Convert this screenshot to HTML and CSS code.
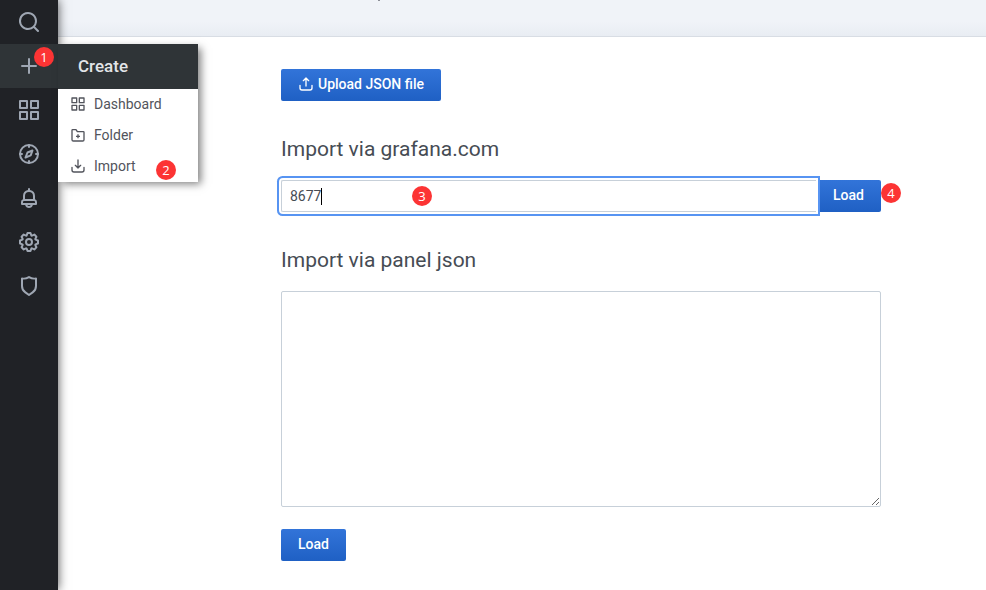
FILE: index.html
```html
<!DOCTYPE html>
<html lang="en">
<head>
<meta charset="utf-8">
<title>Import dashboard</title>
<link rel="stylesheet" href="styles.css">
</head>
<body>
<svg class="defs" aria-hidden="true">
  <symbol id="apps" viewBox="0 0 24 24"><path d="M10,13H3a1,1,0,0,0-1,1v7a1,1,0,0,0,1,1h7a1,1,0,0,0,1-1V14A1,1,0,0,0,10,13ZM9,20H4V15H9ZM21,2H14a1,1,0,0,0-1,1v7a1,1,0,0,0,1,1h7a1,1,0,0,0,1-1V3A1,1,0,0,0,21,2ZM20,9H15V4h5Zm1,4H14a1,1,0,0,0-1,1v7a1,1,0,0,0,1,1h7a1,1,0,0,0,1-1V14A1,1,0,0,0,21,13Zm-1,7H15V15h5ZM10,2H3A1,1,0,0,0,2,3v7a1,1,0,0,0,1,1h7a1,1,0,0,0,1-1V3A1,1,0,0,0,10,2ZM9,9H4V4H9Z"/></symbol>
</svg>
<div class="app">
  <nav class="sidebar" aria-label="Main">
    <a class="side-link" href="#" aria-label="Search"><svg class="icon" viewBox="0 0 24 24"><path d="M21.71,20.29,18,16.61A9,9,0,1,0,16.61,18l3.68,3.68a1,1,0,0,0,1.42,0A1,1,0,0,0,21.71,20.29ZM11,18a7,7,0,1,1,7-7A7,7,0,0,1,11,18Z"/></svg></a>
    <div class="side-item active">
      <a class="side-link" href="#" aria-label="Create"><svg class="icon" viewBox="0 0 24 24"><path d="M19,11H13V5a1,1,0,0,0-2,0v6H5a1,1,0,0,0,0,2h6v6a1,1,0,0,0,2,0V13h6a1,1,0,0,0,0-2Z"/></svg></a>
      <span class="badge badge-create">1</span>
      <div class="menu">
        <a class="menu-title" href="#">Create</a>
        <a class="menu-link" href="#"><svg class="icon small"><use href="#apps"/></svg>Dashboard</a>
        <a class="menu-link" href="#"><svg class="icon small" viewBox="0 0 24 24"><path class="line" d="M3 5a1 1 0 0 1 1-1h5l2 3h9a1 1 0 0 1 1 1v11a2 2 0 0 1-2 2H5a2 2 0 0 1-2-2Z"/><path d="M11 11h2v2h2v2h-2v2h-2v-2H9v-2h2Z"/></svg>Folder</a>
        <a class="menu-link" href="#"><svg class="icon small" viewBox="0 0 24 24"><path class="line" d="M12 3v12M8 11l4 4 4-4M3 14v4a3 3 0 0 0 3 3h12a3 3 0 0 0 3-3v-4"/></svg>Import<span class="badge badge-import">2</span></a>
      </div>
    </div>
    <a class="side-link" href="#" aria-label="Dashboards"><svg class="icon"><use href="#apps"/></svg></a>
    <a class="side-link" href="#" aria-label="Explore"><svg class="icon" viewBox="0 0 24 24"><g class="line"><circle cx="12" cy="12" r="9"/><path d="M12 3v2M12 19v2M3 12h2M19 12h2"/><path d="M15.500 8.500 13.700 13.300 8.500 15.500 10.500 10.500Z"/></g></svg></a>
    <a class="side-link" href="#" aria-label="Alerting"><svg class="icon" viewBox="0 0 24 24"><path d="M18,13.180V10a6,6,0,0,0-5-5.910V3a1,1,0,0,0-2,0V4.090A6,6,0,0,0,6,10v3.180A3,3,0,0,0,4,16v2a1,1,0,0,0,1,1H8.140a4,4,0,0,0,7.720,0H19a1,1,0,0,0,1-1V16A3,3,0,0,0,18,13.180ZM8,10a4,4,0,0,1,8,0v3H8Zm4,10a2,2,0,0,1-1.720-1h3.440A2,2,0,0,1,12,20Zm6-3H6V16a1,1,0,0,1,1-1H17a1,1,0,0,1,1,1Z"/></svg></a>
    <a class="side-link" href="#" aria-label="Configuration"><svg class="icon" viewBox="0 0 24 24"><path d="M21.32,9.55l-1.89-.63.89-1.78A1,1,0,0,0,20.13,6L18,3.87a1,1,0,0,0-1.15-.19l-1.78.89-.63-1.89A1,1,0,0,0,13.5,2h-3a1,1,0,0,0-.95.68L8.92,4.57,7.14,3.68A1,1,0,0,0,6,3.87L3.87,6a1,1,0,0,0-.19,1.15l.89,1.78-1.89.63A1,1,0,0,0,2,10.5v3a1,1,0,0,0,.68.95l1.89.63-.89,1.78A1,1,0,0,0,3.87,18L6,20.13a1,1,0,0,0,1.15.19l1.78-.89.63,1.89a1,1,0,0,0,.95.68h3a1,1,0,0,0,.95-.68l.63-1.89,1.78.89A1,1,0,0,0,18,20.13L20.13,18a1,1,0,0,0,.19-1.15l-.89-1.78,1.89-.63A1,1,0,0,0,22,13.5v-3A1,1,0,0,0,21.32,9.55ZM20,12.78l-1.2.4A2,2,0,0,0,17.64,16l.57,1.14-1.1,1.1L16,17.64a2,2,0,0,0-2.79,1.16l-.4,1.2H11.22l-.4-1.2A2,2,0,0,0,8,17.64l-1.14.57-1.1-1.1L6.36,16A2,2,0,0,0,5.2,13.18L4,12.78V11.22l1.2-.4A2,2,0,0,0,6.36,8L5.79,6.89l1.1-1.1L8,6.36A2,2,0,0,0,10.82,5.2l.4-1.2h1.56l.4,1.2A2,2,0,0,0,16,6.36l1.14-.57,1.1,1.1L17.64,8a2,2,0,0,0,1.16,2.79l1.2.4ZM12,8a4,4,0,1,0,4,4A4,4,0,0,0,12,8Zm0,6a2,2,0,1,1,2-2A2,2,0,0,1,12,14Z"/></svg></a>
    <a class="side-link" href="#" aria-label="Server admin"><svg class="icon" viewBox="0 0 24 24"><path d="M19.63,3.65a1,1,0,0,0-.84-.2,8,8,0,0,1-6.22-1.27,1,1,0,0,0-1.14,0A8,8,0,0,1,5.21,3.45a1,1,0,0,0-.84.2A1,1,0,0,0,4,4.43v7.45a9,9,0,0,0,3.77,7.33l3.65,2.6a1,1,0,0,0,1.16,0l3.65-2.6A9,9,0,0,0,20,11.88V4.43A1,1,0,0,0,19.63,3.65ZM18,11.88a7,7,0,0,1-2.93,5.7L12,19.77,8.93,17.58A7,7,0,0,1,6,11.88V5.58a10,10,0,0,0,6-1.39,10,10,0,0,0,6,1.39Z"/></svg></a>
  </nav>
  <div class="page">
    <header class="page-header"></header>
    <main class="content">
      <button class="btn" type="button"><svg class="icon small" viewBox="0 0 24 24"><path class="line" d="M12 15V3M8 7l4-4 4 4M3 14v4a3 3 0 0 0 3 3h12a3 3 0 0 0 3-3v-4"/></svg>Upload JSON file</button>
      <form class="field">
        <label class="heading" for="dashboard-id">Import via grafana.com</label>
        <div class="input-row">
          <div class="input-wrap">
            <input class="text-input" id="dashboard-id" type="text" value="8677">
            <span class="caret"></span>
            <span class="badge badge-id">3</span>
          </div>
          <button class="btn" type="button">Load</button>
          <span class="badge badge-load">4</span>
        </div>
      </form>
      <form class="field">
        <label class="heading" for="panel-json">Import via panel json</label>
        <textarea class="json-input" id="panel-json"></textarea>
        <button class="btn" type="button">Load</button>
      </form>
    </main>
  </div>
</div>
</body>
</html>
```
FILE: styles.css
```css
* { box-sizing: border-box; }

body {
  margin: 0;
  background: #fff;
  color: #464c54;
  font: 14px/20px Roboto, sans-serif;
}

a { color: inherit; text-decoration: none; }

.defs { position: absolute; width: 0; height: 0; }

.app { display: flex; min-height: 100vh; }

.icon { width: 24px; height: 24px; flex: none; fill: currentColor; }
.small { width: 16px; height: 16px; }
.line {
  fill: none;
  stroke: currentColor;
  stroke-width: 2;
  stroke-linecap: round;
  stroke-linejoin: round;
}

/* Sidebar */
.sidebar {
  position: relative;
  z-index: 2;
  flex: none;
  width: 58px;
  background: #202226;
  color: #9fa7b3;
  box-shadow: 0 0 10px rgba(0, 0, 0, 0.7);
}
.side-link {
  display: flex;
  align-items: center;
  justify-content: center;
  height: 44px;
}
.side-item { position: relative; }
.active { background: #2f3437; }

.menu {
  position: absolute;
  top: 0;
  left: 100%;
  width: 140px;
  background: #fff;
  color: #52545c;
  box-shadow: 4px 3px 8px -1px rgba(0, 0, 0, 0.5);
}
.menu-title {
  display: block;
  padding: 12px 20px 13px;
  background: #2f3437;
  color: #e3e5e8;
  font-size: 17px;
  font-weight: 500;
}
.menu-link {
  position: relative;
  display: flex;
  align-items: center;
  gap: 8px;
  height: 31px;
  padding: 0 12px 1px;
}

/* Numbered markers */
.badge {
  position: absolute;
  z-index: 4;
  width: 20px;
  height: 20px;
  border-radius: 50%;
  background: #fc3434;
  color: #fff;
  font: 13px/20px "Open Sans", sans-serif;
  text-align: center;
}
.badge-create { top: 3px; left: 34px; }
.badge-import { top: 9px; left: 98px; }
.badge-id { top: 6px; left: 131px; }
.badge-load { top: 3px; left: 100%; }

/* Page */
.page { flex: 1; min-width: 0; }
.page-header {
  position: relative;
  height: 37px;
  background: linear-gradient(#f0f3f8 60%, #e9edf3);
  border-bottom: 1px solid #d8dde4;
}
/* Tail of the subtitle scrolled out of view */
.page-header::before {
  content: "";
  position: absolute;
  top: 0;
  left: 320px;
  width: 2px;
  height: 1px;
  background: #8d8f98;
}
.content {
  max-width: 823px;
  margin: 32px 0 29px;
  padding-left: 223px;
}

.btn {
  display: inline-flex;
  align-items: center;
  gap: 4px;
  height: 32px;
  padding: 0 16px 2px;
  border: 1px solid transparent;
  border-radius: 2px;
  background: linear-gradient(#3274d9, #1f60c4) border-box;
  color: #fff;
  font: 500 14px/20px Roboto, sans-serif;
}

.field { margin-top: 36px; }
.heading {
  display: block;
  margin-bottom: 19px;
  font-size: 21px;
  line-height: 24px;
}
.input-row { position: relative; display: flex; }
.input-wrap { position: relative; z-index: 1; flex: 1; }
.text-input {
  display: block;
  width: 100%;
  height: 32px;
  padding: 0 8px;
  border: 1px solid #c7d0d9;
  border-right: 0;
  border-radius: 2px 0 0 2px;
  outline: 0;
  background: #fff;
  box-shadow: 0 0 0 2px #fff, 0 0 0 4px #5794f2;
  color: #464c54;
  font: inherit;
}
.caret {
  position: absolute;
  top: 8px;
  left: 40px;
  width: 1px;
  height: 17px;
  background: #000;
}
.json-input {
  display: block;
  width: 100%;
  height: 216px;
  margin-bottom: 22px;
  padding: 8px;
  border: 1px solid #c7d0d9;
  border-radius: 2px;
  background: #fff;
  font: inherit;
  resize: vertical;
}
```
